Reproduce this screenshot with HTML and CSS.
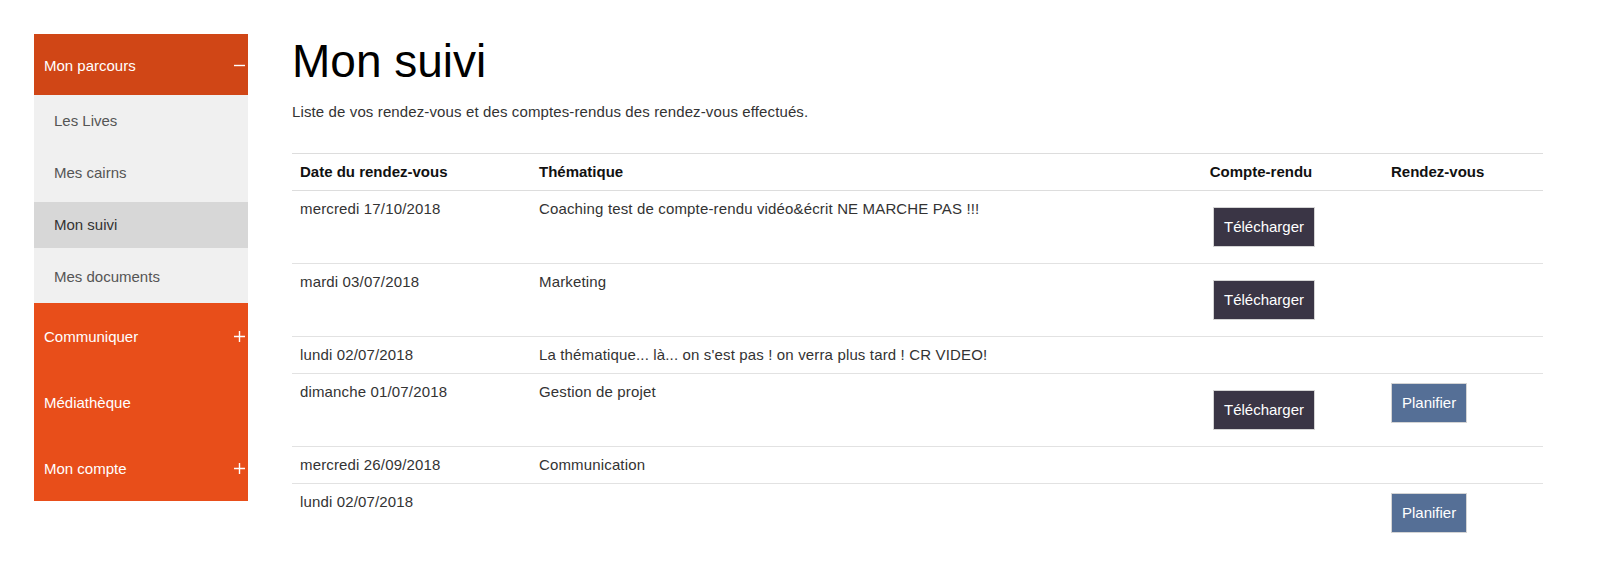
FILE: index.html
```html
<!DOCTYPE html>
<html lang="fr">
<head>
  <meta charset="UTF-8">
  <meta name="viewport" content="width=device-width, initial-scale=1.0">
  <title>Mon suivi</title>
  <link rel="stylesheet" href="styles.css">
</head>
<body>
  <div class="page">
    <nav class="sidebar">
      <ul class="menu">
        <li class="menu-section open">
          <a class="menu-head" href="#">
            <span>Mon parcours</span>
            <svg class="toggle" viewBox="0 0 11 11"><path d="M0 5.5h11"/></svg>
          </a>
          <ul class="submenu">
            <li><a href="#">Les Lives</a></li>
            <li><a href="#">Mes cairns</a></li>
            <li class="active"><a href="#">Mon suivi</a></li>
            <li><a href="#">Mes documents</a></li>
          </ul>
        </li>
        <li class="menu-section">
          <a class="menu-head" href="#">
            <span>Communiquer</span>
            <svg class="toggle" viewBox="0 0 11 11"><path d="M0 5.5h11M5.5 0v11"/></svg>
          </a>
        </li>
        <li class="menu-section">
          <a class="menu-head" href="#">
            <span>Médiathèque</span>
          </a>
        </li>
        <li class="menu-section">
          <a class="menu-head" href="#">
            <span>Mon compte</span>
            <svg class="toggle" viewBox="0 0 11 11"><path d="M0 5.5h11M5.5 0v11"/></svg>
          </a>
        </li>
      </ul>
    </nav>

    <main class="content">
      <h1>Mon suivi</h1>
      <p class="intro">Liste de vos rendez-vous et des comptes-rendus des rendez-vous effectués.</p>

      <table class="suivi">
        <colgroup>
          <col class="col-date">
          <col class="col-theme">
          <col class="col-cr">
          <col class="col-rdv">
        </colgroup>
        <thead>
          <tr>
            <th>Date du rendez-vous</th>
            <th>Thématique</th>
            <th class="center">Compte-rendu</th>
            <th>Rendez-vous</th>
          </tr>
        </thead>
        <tbody>
          <tr>
            <td>mercredi 17/10/2018</td>
            <td>Coaching test de compte-rendu vidéo&amp;écrit NE MARCHE PAS !!!</td>
            <td class="center"><button class="btn btn-dl">Télécharger</button></td>
            <td></td>
          </tr>
          <tr>
            <td>mardi 03/07/2018</td>
            <td>Marketing</td>
            <td class="center"><button class="btn btn-dl">Télécharger</button></td>
            <td></td>
          </tr>
          <tr>
            <td>lundi 02/07/2018</td>
            <td>La thématique... là... on s'est pas ! on verra plus tard ! CR VIDEO!</td>
            <td></td>
            <td></td>
          </tr>
          <tr>
            <td>dimanche 01/07/2018</td>
            <td>Gestion de projet</td>
            <td class="center"><button class="btn btn-dl">Télécharger</button></td>
            <td><button class="btn btn-plan">Planifier</button></td>
          </tr>
          <tr>
            <td>mercredi 26/09/2018</td>
            <td>Communication</td>
            <td></td>
            <td></td>
          </tr>
          <tr>
            <td>lundi 02/07/2018</td>
            <td></td>
            <td></td>
            <td><button class="btn btn-plan">Planifier</button></td>
          </tr>
        </tbody>
      </table>
    </main>
  </div>
</body>
</html>
```

FILE: styles.css
```css
* {
  box-sizing: border-box;
  margin: 0;
  padding: 0;
}
body {
  background-color: #fff;
  color: #333;
  font-family: 'Liberation Sans', Arial, sans-serif;
  font-size: 15px;
  line-height: 20px;
}
a {
  text-decoration: none;
}
ul {
  list-style: none;
}
.page {
  display: flex;
  align-items: flex-start;
  gap: 44px;
  padding: 34px 0 0 34px;
}

/* menu lateral */
.sidebar {
  width: 214px;
  flex-shrink: 0;
}
.menu-head {
  display: flex;
  justify-content: space-between;
  align-items: center;
  padding: 23px 3px 22px 10px;
  line-height: 21px;
  background-color: #e84e1a;
  color: #fff;
}
.menu-section.open .menu-head {
  padding-top: 21px;
  padding-bottom: 19px;
  background-color: #d04616;
}
.toggle {
  width: 11px;
  height: 11px;
  fill: none;
  stroke: #fff;
  stroke-width: 1.4;
}
.submenu {
  background-color: #f0f0f0;
}
.submenu li {
  padding: 3px 0;
}
.submenu a {
  display: block;
  height: 46px;
  line-height: 46px;
  padding-left: 20px;
  color: #555;
}
.submenu li.active a {
  background-color: #d7d7d7;
  color: #333;
}

/* contenu */
.content {
  width: 1251px;
  padding-top: 2px;
}
h1 {
  font-size: 46px;
  font-weight: normal;
  line-height: 1.1;
  color: #000;
}
.intro {
  margin: 15px 0 31px;
  letter-spacing: 0.12px;
}
.suivi {
  width: 100%;
  border-collapse: collapse;
  table-layout: fixed;
}
.col-date { width: 239px; }
.col-theme { width: 608px; }
.col-cr { width: 244px; }
.col-rdv { width: 160px; }
.suivi th {
  text-align: left;
  font-weight: bold;
  color: #111;
  padding: 8px;
  border-top: 1px solid #ddd;
  border-bottom: 1px solid #ddd;
}
.suivi td {
  padding: 8px;
  vertical-align: top;
  letter-spacing: 0.15px;
  border-bottom: 1px solid #e2e2e2;
}
.suivi tbody tr:last-child td {
  border-bottom: none;
}
.suivi .center {
  text-align: center;
}
.suivi td.center {
  padding-left: 11px;
  padding-right: 5px;
}
.btn {
  font-family: inherit;
  font-size: 15px;
  line-height: 20px;
  letter-spacing: 0;
  padding: 9px 10px;
  color: #fff;
  border: 1px solid #d4d4d4;
  cursor: pointer;
}
.btn-dl {
  margin: 8px 0;
  background-color: #3a3545;
}
.btn-plan {
  margin-top: 1px;
  background-color: #556f96;
}
```
